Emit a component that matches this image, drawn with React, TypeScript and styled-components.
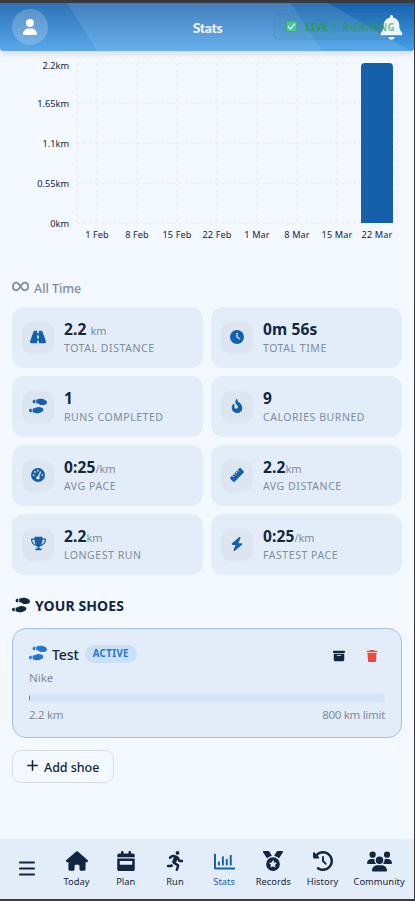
import React from "react";
import styled, { createGlobalStyle } from "styled-components";
import { FaRunning, FaRegChartBar, FaShoePrints } from "react-icons/fa";
import {
  FaRoad, FaClock, FaFireFlameCurved, FaTrophy, FaBolt, FaBoxArchive, FaTrash, FaGaugeHigh, FaRuler,
  FaHouse, FaCalendarWeek, FaMedal, FaClockRotateLeft, FaUsers, FaUser, FaBell,
} from "react-icons/fa6";

const ink = "#13263f";
const muted = "#7f8c9d";
const blue = "#1560ab";

const GlobalStyle = createGlobalStyle`
  * { box-sizing: border-box; }
  body { margin: 0; background: #f4f8ff; font-family: "Noto Sans", "Open Sans", sans-serif; color: ${ink}; }
  svg { display: block; flex: none; }
`;

const Screen = styled.div`
  width: 415px;
  height: 901px;
  display: flex;
  flex-direction: column;
  overflow: hidden;
  background: #f4f8ff;
  border: solid #383a3d;
  border-width: 3px 1px 2px 0;
`;

const Header = styled.header`
  position: relative;
  height: 48px;
  flex: none;
  display: grid;
  grid-template-columns: 1fr auto 1fr;
  align-items: center;
  padding: 0 11px 0 12px;
  background: linear-gradient(180deg, #1661ad, #469fe9);
  box-shadow: 0 2px 7px rgba(20, 38, 63, 0.16);
  border-radius: 0 0 3px 3px;
`;

const Facets = styled.svg`
  position: absolute;
  inset: 0;
`;

const Avatar = styled.div`
  position: relative;
  width: 36px;
  height: 36px;
  border-radius: 50%;
  background: rgba(255, 255, 255, 0.2);
  color: #fff;
  display: grid;
  place-items: center;
`;

const Title = styled.h1`
  position: relative;
  margin: 2px 0 0;
  font: 900 14px/20px Lato, sans-serif;
  letter-spacing: -0.3px;
  color: #eef5fd;
`;

const Bell = styled.div`
  position: relative;
  justify-self: end;
  margin-right: -1px;
  color: #fff;
`;

const LiveBadge = styled.div`
  position: absolute;
  left: 273px;
  top: 10px;
  width: 131px;
  height: 27px;
  display: flex;
  align-items: center;
  padding-left: 12px;
  border: 1px solid rgba(40, 145, 140, 0.25);
  border-radius: 6px;
  background: rgba(25, 140, 120, 0.08);
  color: #279c4c;
  font-size: 10px;
  font-weight: 700;
  letter-spacing: 0.45px;
`;

const Tick = styled.span`
  width: 11px;
  height: 11px;
  margin-right: 8px;
  background: #4bc691;
  border: 1px solid #33b47e;
  display: grid;
  place-items: center;
`;

const Running = styled.span`
  margin-left: 6px;
  padding-left: 7px;
  line-height: 14px;
  border-left: 1px solid rgba(42, 158, 110, 0.7);
  color: rgba(39, 156, 76, 0.6);
`;

const Main = styled.main`
  flex: 1;
  min-height: 0;
  padding: 4px 12px 0;
`;

const Chart = styled.section`
  height: 196px;
  margin: 0 -12px;
  display: grid;
  grid-template-columns: 69px 1fr;
  grid-template-rows: 174px 1fr;
  font-size: 9.2px;
  line-height: 12px;
`;

const YAxis = styled.div`
  display: flex;
  flex-direction: column;
  padding-top: 5px;
  text-align: right;
  span { height: 12px; }
  span:nth-child(2) { margin-top: 26px; }
  span:nth-child(n + 3) { margin-top: 28px; }
`;

const Plot = styled.svg`
  width: 345px;
  height: 174px;
`;

const XAxis = styled.div`
  grid-column: 2;
  display: grid;
  grid-template-columns: repeat(8, 40px);
  margin-left: 8px;
  text-align: center;
  white-space: nowrap;
  letter-spacing: 0.1px;
  span { justify-self: center; }
`;

const Section = styled.h2`
  margin: 29px 0 0;
  height: 16px;
  display: flex;
  align-items: center;
  gap: 5px;
  font-size: 12.5px;
  font-weight: 500;
  letter-spacing: -0.05px;
  color: ${muted};
  svg { margin-bottom: 4px; }
`;

const StatsGrid = styled.section`
  margin-top: 11px;
  display: grid;
  grid-template-columns: repeat(2, 191px);
  gap: 8px;
`;

const StatCard = styled.article`
  height: 61px;
  padding: 0 10px;
  display: flex;
  align-items: center;
  gap: 10px;
  border-radius: 12px;
  background: #e3edf9;
`;

const IconTile = styled.div`
  width: 32px;
  height: 32px;
  border-radius: 9px;
  display: grid;
  place-items: center;
  padding-bottom: 2px;
  color: ${blue};
  background: #dde5f1;
`;

const Value = styled.div`
  padding-top: 1px;
  font-size: 15.5px;
  line-height: 19px;
  font-weight: 700;
  white-space: pre;
  letter-spacing: 0.15px;
  small { font-size: 11px; font-weight: 400; color: ${muted}; letter-spacing: -0.1px; }
`;

const Gap = styled.span`
  display: inline-block;
  width: 4px;
`;

const Label = styled.div`
  font-size: 10.5px;
  line-height: 17px;
  letter-spacing: 0.55px;
  text-transform: uppercase;
  color: ${muted};
`;

const ShoesTitle = styled.h2`
  margin: 21px 0 0;
  height: 18px;
  display: flex;
  align-items: center;
  gap: 5px;
  font-size: 14px;
  font-weight: 700;
  letter-spacing: 0.1px;
`;

const ShoeCard = styled.article`
  margin-top: 14px;
  height: 110px;
  padding: 15px 16px;
  border: 1px solid #a0c0ea;
  border-radius: 14px;
  background: #e3edf9;
  color: ${muted};
  font-size: 11.5px;
  line-height: 16px;
  letter-spacing: -0.3px;
`;

const ShoeTop = styled.div`
  display: flex;
  align-items: center;
  height: 20px;
  color: #2577ca;
  > svg:first-child { margin-bottom: 3px; }
`;

const ShoeName = styled.strong`
  margin: 1px 6px 0 5px;
  font-size: 14px;
  font-weight: 500;
  letter-spacing: -0.1px;
  color: ${ink};
`;

const ActivePill = styled.span`
  height: 18px;
  padding: 0 8px;
  border-radius: 9px;
  background: #cbdff5;
  font-size: 9.7px;
  line-height: 18px;
  font-weight: 700;
  letter-spacing: 0.4px;
`;

const ShoeActions = styled.div`
  display: flex;
  gap: 21px;
  margin: 4px 7px 0 auto;
  color: ${ink};
  svg:last-child { color: #e94b3c; }
`;

const Brand = styled.div`
  margin-top: 6px;
  letter-spacing: 0;
`;

const Track = styled.div`
  height: 8px;
  margin-top: 8px;
  border-radius: 4px;
  overflow: hidden;
  background: #d4e3f5;
`;

const Fill = styled.div`
  width: 1px;
  height: 8px;
  background: #2577ca;
`;

const Range = styled.div`
  margin-top: 5px;
  display: flex;
  justify-content: space-between;
`;

const AddButton = styled.button`
  margin: 12px 0 0;
  width: 102px;
  height: 33px;
  padding: 0 0 0 14px;
  display: flex;
  align-items: center;
  gap: 6px;
  border: 1px solid #d7dce4;
  border-radius: 9px;
  background: transparent;
  color: ${ink};
  font: 500 12.5px "Noto Sans", sans-serif;
  letter-spacing: -0.05px;
  svg { margin-bottom: 3px; }
  span { margin-top: 1px; white-space: nowrap; }
`;

const Nav = styled.nav`
  flex: none;
  height: 60px;
  display: grid;
  grid-template-columns: 52px repeat(6, 49.2px) 64px;
  background: #e3edf9;
`;

const NavItem = styled.a<{ $active?: boolean }>`
  display: flex;
  flex-direction: column;
  align-items: center;
  padding-top: 12px;
  color: ${(p) => (p.$active ? blue : ink)};
  font-size: 9.3px;
  line-height: 14px;
  letter-spacing: 0.05px;
`;

const NavIcon = styled.span`
  height: 24px;
  display: flex;
  justify-content: center;
  align-items: center;
  padding-bottom: 4px;
`;

const MenuButton = styled.div`
  display: flex;
  justify-content: flex-end;
  padding: 22px 17px 0 0;
`;

const days = ["1 Feb", "8 Feb", "15 Feb", "22 Feb", "1 Mar", "8 Mar", "15 Mar", "22 Mar"];
const ticks = ["2.2km", "1.65km", "1.1km", "0.55km", "0km"];

const stats = [
  { icon: <FaRoad size={16} />, value: "2.2", unit: "km", spaced: true, label: "Total distance" },
  { icon: <FaClock size={14} />, value: "0m 56s", unit: "", label: "Total time" },
  { icon: <FaShoePrints size={18} />, value: "1", unit: "", label: "Runs completed" },
  { icon: <FaFireFlameCurved size={14} />, value: "9", unit: "", label: "Calories burned" },
  { icon: <FaGaugeHigh size={14} />, value: "0:25", unit: "/km", label: "Avg pace" },
  { icon: <FaRuler size={14} />, value: "2.2", unit: "km", label: "Avg distance" },
  { icon: <FaTrophy size={15} />, value: "2.2", unit: "km", label: "Longest run" },
  { icon: <FaBolt size={14} />, value: "0:25", unit: "/km", label: "Fastest pace" },
];

const nav = [
  { icon: <FaHouse size={22} />, label: "Today" },
  { icon: <FaCalendarWeek size={20} />, label: "Plan" },
  { icon: <FaRunning size={20} />, label: "Run" },
  { icon: <FaRegChartBar size={21} />, label: "Stats", active: true },
  { icon: <FaMedal size={20} />, label: "Records" },
  { icon: <FaClockRotateLeft size={20} />, label: "History" },
  { icon: <FaUsers size={25} />, label: "Community" },
];

export default function App() {
  return (
    <Screen>
      <GlobalStyle />
      <Header>
        <Facets width="414" height="48">
          <path d="M0 0H67L97 48H0Z" fill="#fff" opacity=".1" />
          <path d="M67 0H291L322 48H97Z" fill="#fff" opacity=".19" />
          <path d="M291 0H328L411 48H322Z" fill="#fff" opacity=".11" />
        </Facets>
        <Avatar><FaUser size={16} /></Avatar>
        <Title>Stats</Title>
        <Bell><FaBell size={25} /></Bell>
        <LiveBadge>
          <Tick>
            <svg width="9" height="9" viewBox="0 0 9 9" fill="none" stroke="#e8fff4" strokeWidth="1.3"><path d="M1 4.5 3.5 7 8 1.8" /></svg>
          </Tick>
          LIVE
          <Running>RUNNING</Running>
        </LiveBadge>
      </Header>
      <Main>
        <Chart>
          <YAxis>{ticks.map((t) => <span key={t}>{t}</span>)}</YAxis>
          <Plot viewBox="0 0 345 174">
            <g stroke="#e8edf7" strokeDasharray="3 3" fill="none">
              {[8.5, 48.5, 88.5, 128.5, 168.5].map((y) => <path key={y} d={`M8 ${y}H328`} strokeWidth="1.4" />)}
              {[8, 28, 68, 108, 148, 188, 228, 268, 308, 328].map((x) => <path key={x} d={`M${x} 8.5V168.5`} strokeWidth="1.6" />)}
            </g>
            <path d="M292 168V12a4 4 0 0 1 4-4h24a4 4 0 0 1 4 4V168Z" fill={blue} />
          </Plot>
          <XAxis>{days.map((d) => <span key={d}>{d}</span>)}</XAxis>
        </Chart>
        <Section>
          <svg width="17" height="11" viewBox="0 0 17 11" fill="none" stroke="currentColor" strokeWidth="1.7">
            <path d="M8.5 5.5C6.9 3 5.8 1.7 4.3 1.7a3.4 3.4 0 0 0-3.4 3.8c0 2.2 1.5 3.8 3.4 3.8 1.5 0 2.6-1.3 4.2-3.8S11.2 1.7 12.7 1.7c1.9 0 3.4 1.6 3.4 3.8s-1.5 3.8-3.4 3.8c-1.5 0-2.6-1.3-4.2-3.8Z" />
          </svg>
          All Time
        </Section>
        <StatsGrid>
          {stats.map((s) => (
            <StatCard key={s.label}>
              <IconTile>{s.icon}</IconTile>
              <div>
                <Value>{s.value}{s.spaced && <Gap />}<small>{s.unit}</small></Value>
                <Label>{s.label}</Label>
              </div>
            </StatCard>
          ))}
        </StatsGrid>
        <ShoesTitle><FaShoePrints size={18} />YOUR SHOES</ShoesTitle>
        <ShoeCard>
          <ShoeTop>
            <FaShoePrints size={18} />
            <ShoeName>Test</ShoeName>
            <ActivePill>ACTIVE</ActivePill>
            <ShoeActions><FaBoxArchive size={12} /><FaTrash size={12} /></ShoeActions>
          </ShoeTop>
          <Brand>Nike</Brand>
          <Track><Fill /></Track>
          <Range><span>2.2 km</span><span>800 km limit</span></Range>
        </ShoeCard>
        <AddButton>
          <svg width="11" height="11" viewBox="0 0 11 11" stroke="currentColor" strokeWidth="1.5" strokeLinecap="round"><path d="M5.5 .8V10.2M.8 5.5H10.2" /></svg>
          <span>Add shoe</span>
        </AddButton>
      </Main>
      <Nav>
        <MenuButton>
          <svg width="16" height="15" viewBox="0 0 16 15" stroke="currentColor" strokeWidth="2" strokeLinecap="round"><path d="M1 1.5H15M1 7.5H15M1 13.5H15" /></svg>
        </MenuButton>
        {nav.map((n) => (
          <NavItem key={n.label} $active={n.active}><NavIcon>{n.icon}</NavIcon>{n.label}</NavItem>
        ))}
      </Nav>
    </Screen>
  );
}
